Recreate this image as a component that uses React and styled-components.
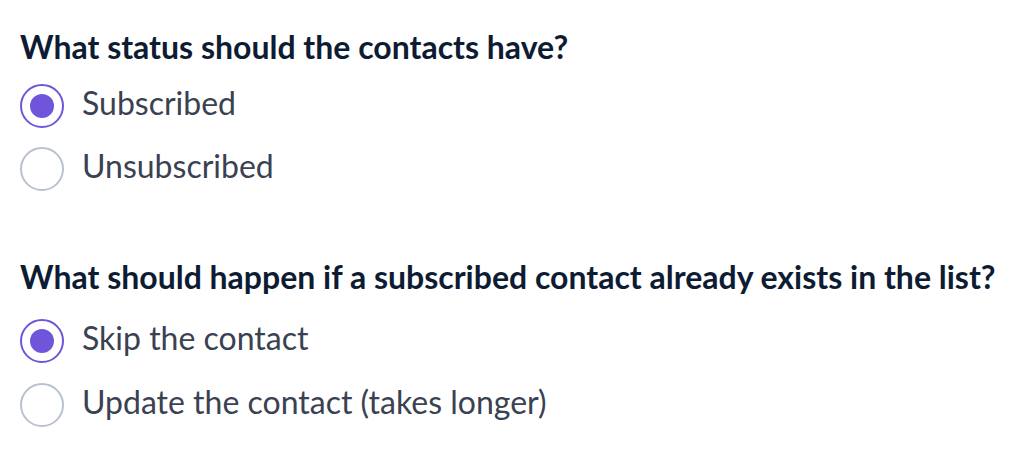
import React, { useState } from "react";
import styled, { createGlobalStyle } from "styled-components";

const GlobalStyle = createGlobalStyle`
  body {
    margin: 0;
    background: #ffffff;
    font-family: Lato, "Noto Sans", sans-serif;
  }
`;

const Page = styled.div`
  display: flex;
  flex-direction: column;
  gap: 66px;
  padding: 27px 20px 0 20px;
`;

const Group = styled.fieldset`
  border: 0;
  margin: 0;
  padding: 0;
  min-width: 0;
  display: flex;
  flex-direction: column;
`;

const Question = styled.legend`
  padding: 0;
  margin: 0 0 ${(p) => p.$gap}px 0;
  font-size: 32px;
  line-height: 40px;
  font-weight: 700;
  color: #0e1c33;
`;

const Options = styled.div`
  display: flex;
  flex-direction: column;
  gap: ${(p) => p.$gap}px;
`;

const Option = styled.label`
  display: flex;
  align-items: flex-start;
  gap: 18px;
  height: 44px;
  cursor: pointer;
`;

const Circle = styled.span`
  box-sizing: border-box;
  width: 44px;
  height: 44px;
  flex: none;
  border-radius: 50%;
  border: 2px solid ${(p) => (p.$on ? "#6f55da" : "#b9c1d0")};
  display: flex;
  align-items: center;
  justify-content: center;
  background: #fff;

  &::after {
    content: "";
    width: 24px;
    height: 24px;
    border-radius: 50%;
    background: #6f55da;
    display: ${(p) => (p.$on ? "block" : "none")};
  }
`;

const HiddenInput = styled.input`
  position: absolute;
  opacity: 0;
  width: 0;
  height: 0;
`;

const Label = styled.span`
  font-size: 32px;
  line-height: 37px;
  color: #3a4151;
`;

function RadioGroup({ name, question, options, value, onChange, gap, rowGap }) {
  return (
    <Group>
      <Question $gap={gap}>{question}</Question>
      <Options $gap={rowGap}>
        {options.map((opt) => (
          <Option key={opt.value}>
            <HiddenInput
              type="radio"
              name={name}
              value={opt.value}
              checked={value === opt.value}
              onChange={() => onChange(opt.value)}
            />
            <Circle $on={value === opt.value} />
            <Label>{opt.label}</Label>
          </Option>
        ))}
      </Options>
    </Group>
  );
}

export default function App() {
  const [status, setStatus] = useState("subscribed");
  const [existing, setExisting] = useState("skip");

  return (
    <>
      <GlobalStyle />
      <Page>
        <RadioGroup
          name="status"
          gap={17}
          rowGap={19}
          question="What status should the contacts have?"
          value={status}
          onChange={setStatus}
          options={[
            { value: "subscribed", label: "Subscribed" },
            { value: "unsubscribed", label: "Unsubscribed" },
          ]}
        />
        <RadioGroup
          name="existing"
          gap={22}
          rowGap={20}
          question="What should happen if a subscribed contact already exists in the list?"
          value={existing}
          onChange={setExisting}
          options={[
            { value: "skip", label: "Skip the contact" },
            { value: "update", label: "Update the contact (takes longer)" },
          ]}
        />
      </Page>
    </>
  );
}
